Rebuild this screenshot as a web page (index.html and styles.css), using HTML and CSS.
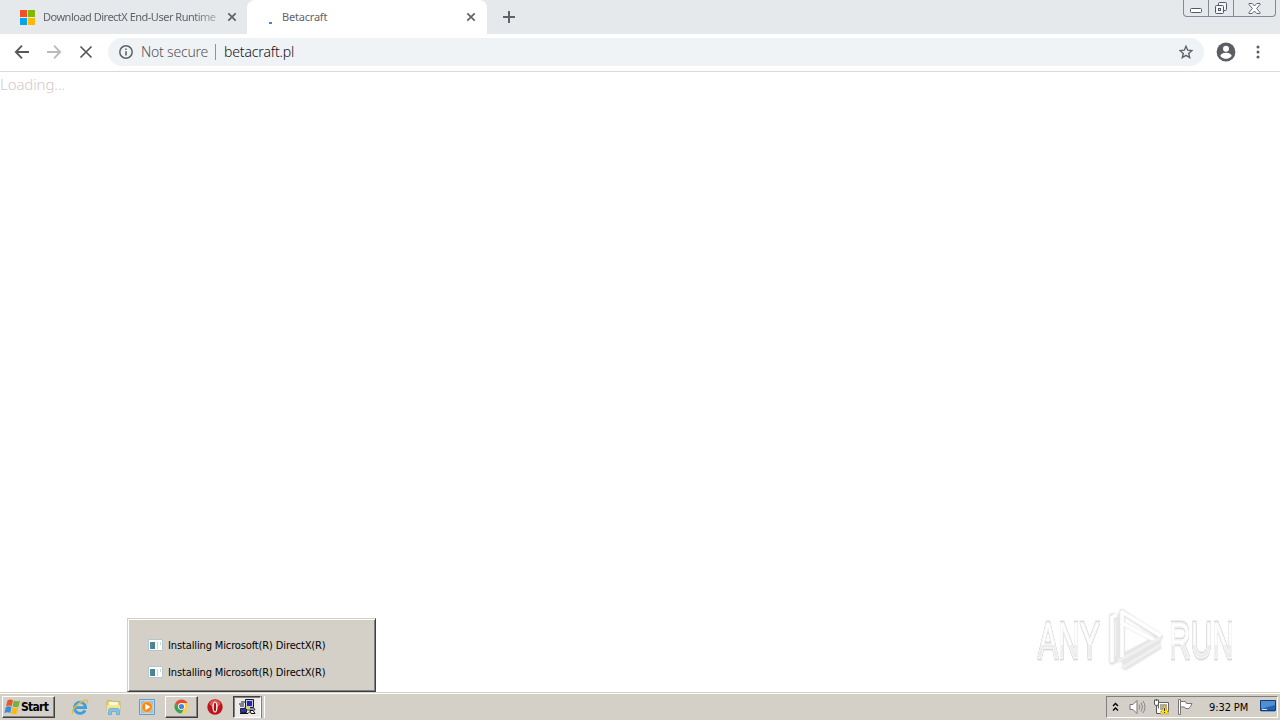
FILE: index.html
```html
<!DOCTYPE html>
<html lang="en">
<head>
<meta charset="utf-8">
<title>Betacraft</title>
<link rel="stylesheet" href="styles.css">
</head>
<body>
<div class="screen">
  <header class="tabstrip">
    <div class="tab tab-first">
      <svg class="favicon" width="15" height="15" viewBox="0 0 15 15"><path fill="#f25022" d="M0 0h7v7H0z"/><path fill="#7fba00" d="M8 0h7v7H8z"/><path fill="#00a4ef" d="M0 8h7v7H0z"/><path fill="#ffb900" d="M8 8h7v7H8z"/></svg>
      <span class="tab-title fade">Download DirectX End-User Runtime</span>
      <svg class="close" width="10" height="10" viewBox="0 0 10 10"><path d="M1.300 1.300l7.400 7.400M8.700 1.300L1.300 8.700"/></svg>
    </div>
    <div class="tab tab-active">
      <span class="spinner"></span>
      <span class="tab-title">Betacraft</span>
      <svg class="close" width="10" height="10" viewBox="0 0 10 10"><path d="M1.300 1.300l7.400 7.400M8.700 1.300L1.300 8.700"/></svg>
    </div>
    <svg class="newtab" width="12" height="12" viewBox="0 0 12 12"><path d="M6 0v12M0 6h12"/></svg>
    <div class="winbuttons">
      <span class="wb wb-side"><svg width="12" height="6" viewBox="0 0 12 6"><rect x=".5" y=".5" width="11" height="4" rx="1" fill="#fff" stroke="#535666"/></svg></span>
      <span class="wb wb-mid"><svg width="14" height="14" viewBox="0 0 14 14" fill="#f4f5f6" stroke="#535666"><rect x="4.5" y="1.5" width="8" height="8" rx="1"/><rect x="1.500" y="4.500" width="8" height="8" rx="1"/><rect x="4.500" y="7.500" width="2" height="2"/></svg></span>
      <span class="wb wb-close"><svg width="13" height="11" viewBox="0 0 13 11"><path d="M1 .5h3.200L6.500 3 8.800.5H12v1L8.600 5.500 12 9.500v1H8.800L6.500 8l-2.300 2.500H1v-1l3.400-4L1 1.500z" fill="#fff" stroke="#535666" stroke-width=".9"/></svg></span>
    </div>
  </header>
  <nav class="toolbar">
    <svg class="nav" width="16" height="16" viewBox="0 0 16 16"><path d="M15 8H2M8 1.700L1.800 8 8 14.300"/></svg>
    <svg class="nav forward" width="16" height="16" viewBox="0 0 16 16"><path d="M1 8h13M8 1.700L14.200 8 8 14.300"/></svg>
    <svg class="nav stop" width="16" height="16" viewBox="0 0 16 16"><path d="M2.500 2.500l11 11M13.500 2.500l-11 11"/></svg>
    <div class="omnibox">
      <svg width="14" height="14" viewBox="0 0 14 14"><circle cx="7" cy="7" r="6.200" fill="none" stroke="#5f6368" stroke-width="1.500"/><path fill="#5f6368" d="M6.200 6.200h1.600v4.200H6.200zM6.200 3.400h1.600V5H6.200z"/></svg>
      <span class="secure">Not secure</span>
      <span class="divider"></span>
      <span class="url">betacraft.pl</span>
      <svg class="star" width="14" height="14" viewBox="0 0 14 14"><path d="M7 1.300l1.700 3.900 4.200.4-3.200 2.800 1 4.200L7 10.400l-3.700 2.200 1-4.200L1.100 5.600l4.200-.4z" fill="none" stroke="#5f6368" stroke-width="1.400"/></svg>
    </div>
    <svg class="profile" width="20" height="20" viewBox="0 0 20 20"><circle cx="10" cy="10" r="9.400" fill="#5a5d62"/><circle cx="10" cy="6.800" r="3" fill="#fff"/><path d="M4.300 14c.5-2.500 4-3.200 5.700-3.200s5.200.7 5.700 3.200c-1.400 1.900-3.500 2.800-5.700 2.800S5.700 15.900 4.300 14z" fill="#fff"/></svg>
    <svg class="menu" width="4" height="14" viewBox="0 0 4 14" fill="#5a5d62"><circle cx="2" cy="2" r="1.500"/><circle cx="2" cy="7" r="1.500"/><circle cx="2" cy="12" r="1.500"/></svg>
  </nav>
  <main class="page">
    <span class="loading">Loading...</span>
  </main>
  <footer class="taskbar">
    <div class="start">
      <svg width="17" height="16" viewBox="0 0 17 16"><path fill="#e8562a" d="M3.500 1.500C5.500 0 7 .2 9 1.200L7.700 7.200C6 6.200 4.200 6.200 2 7.300z"/><path fill="#73b33c" d="M9.800 1.600c2 1 4 1 6.200-.2l-1.400 6c-2 1.200-4 1.200-6 .2z"/><path fill="#3a8ddb" d="M1.700 8.200c2-1.200 4-1 5.800-.1l-1.300 6C4.500 13 2.600 13 .4 14.200z"/><path fill="#f4bb1d" d="M8.300 8.500c2 1 4 1 6-.1l-1.400 6c-2 1.200-4 1.100-5.900.1z"/></svg>
      <span class="start-text">Start</span>
    </div>
    <div class="launch">
      <svg class="ie" width="18" height="18" viewBox="0 0 18 18"><path d="M14 12.300A5.600 5.600 0 1 1 14.600 9.700H4" fill="none" stroke="#3b9fe0" stroke-width="2.800"/><path d="M2 15.700C-1 13 7 4.500 13.500 2.200c3-1 3.500.5 2.500 3" fill="none" stroke="#e9b83d" stroke-width="1.500"/></svg>
      <svg class="folder" width="16" height="16" viewBox="0 0 16 16"><path d="M1 1.500h5l1 1h7v10H1z" fill="#e9cf79" stroke="#c5a74c" stroke-width=".6"/><path d="M3 3h9v4H3z" fill="#f8f7df"/><path d="M1 6h13v7H1z" fill="#f7e58c"/><path d="M2.500 15.500v-4q0-2 2-2h7q2 0 2 2v4h-3v-3h-5v3z" fill="#83c3ea" stroke="#4e9bc9" stroke-width=".6"/></svg>
      <svg class="media" width="16" height="16" viewBox="0 0 16 16"><path d="M.5.500h15v15H.5z" fill="#b7dbf0" stroke="#629cc7"/><path d="M2 2h12v12H2z" fill="#8fc2e4"/><circle cx="8" cy="8" r="5.500" fill="#f38b16" stroke="#ffd497" stroke-width=".7"/><path d="M6.300 4.700L11.500 8l-5.200 3.300z" fill="#fff"/></svg>
      <span class="task chrome"><svg width="15" height="15" viewBox="0 0 16 16"><circle cx="8" cy="8" r="7.500" fill="#ffd044"/><path d="M1.500 4.200A7.500 7.500 0 0 1 14.500 4.250H8L4.800 9.800z" fill="#e54b3c"/><path d="M1.500 4.200A7.500 7.500 0 0 0 7.600 15.500L11.200 9.800H4.800z" fill="#35a35a"/><circle cx="8" cy="8" r="3.700" fill="#fff"/><circle cx="8" cy="8" r="2.800" fill="#4285e8"/></svg></span>
      <svg class="opera" width="16" height="16" viewBox="0 0 16 16"><circle cx="8" cy="8" r="7.700" fill="#c0141b"/><ellipse cx="8" cy="4.500" rx="5.500" ry="3.500" fill="#dc5552"/><ellipse cx="8" cy="8" rx="2.600" ry="5.600" fill="#fff"/><ellipse cx="8" cy="8" rx="1.200" ry="4.500" fill="#aa1118"/></svg>
      <span class="task pressed"><svg width="17" height="16" viewBox="0 0 17 16"><path d="M6.500.5h8v8h-8z" fill="#c9c9c9" stroke="#16162e"/><path d="M8 2h5v5H8z" fill="#1b28c8"/><path d="M2 3h4M0 5h5M1 7h4" stroke="#14144d"/><path d="M5 9h10l1 2H6z" fill="#d9d9dc" stroke="#22223b" stroke-width=".8"/><path d="M1.500 9.500h6v4h-6z" fill="#2634bb" stroke="#22223b"/><path d="M1 14.500h8l2-2" fill="none" stroke="#111"/><path d="M11 11.500h3l2 3h-4z" fill="#fff" stroke="#111"/><path d="M7 8h4v2H7z" fill="#e5cf4e"/></svg></span>
      <span class="task-edge"></span>
    </div>
    <div class="tray">
      <svg class="chevrons" width="7" height="10" viewBox="0 0 7 10"><path d="M1 4l2.500-2.500L6 4M1 8.500L3.500 6 6 8.500" fill="none" stroke="#000" stroke-width="1.400"/></svg>
      <svg class="sound" width="17" height="16" viewBox="0 0 17 16" fill="none" stroke="#777"><path d="M1 5.500h3L8 1.500v13l-4-4H1z" fill="#fff"/><path d="M10 5.500q1.700 2.500 0 5M12 3.500q3 4.500 0 9M14 2q4 6 0 12" stroke="#888"/></svg>
      <svg class="network" width="16" height="16" viewBox="0 0 16 16"><path d="M5.500 3.500h10v9h-10z" fill="#fff" stroke="#666"/><path d="M7 5h7v6H7z" fill="#aaa"/><path d="M1.500 1v4q0 1.500 2 1.500T5.500 5V1zM3.500 6.500v8H9M3.500 0v2" fill="#fff" stroke="#555"/><path d="M11.500 6l4.300 9H7.200z" fill="#ffdd21" stroke="#ba9a18" stroke-width=".6"/><path d="M11 9h1v3h-1zm0 4h1v1h-1z" fill="#333"/></svg>
      <svg class="flag" width="16" height="16" viewBox="0 0 16 16"><path d="M1.500.5h2v15h-2zM3.500 2.500h5l1 2h5.500q-1.500 3.500-3 5H8.500l-1-1.500h-4z" fill="#fff" stroke="#777"/></svg>
      <span class="clock">9:32 PM</span>
      <svg class="desktop" width="16" height="13" viewBox="0 0 16 13"><path d="M.5.500h15v10H.5z" fill="#2163b2" stroke="#133b75"/><path d="M1 1h14v4L1 9z" fill="#4e91d2"/><path d="M1 11h14v1H1z" fill="#77a7d6"/><path d="M2 9h5v1H2z" fill="#d0e6f5"/></svg>
    </div>
  </footer>
  <div class="group-menu">
    <div class="menu-row"><svg width="15" height="12" viewBox="0 0 15 12"><path d="M.5.500h14v11H.5z" fill="#fff" stroke="#b4c8cc"/><path d="M2 3h5v7H2z" fill="#438787"/><path d="M2 3h2v7H2z" fill="#5a80aa"/><path d="M9 3h1v7H9zM12 3h1v3h-1z" fill="#c8d7d9"/></svg><span class="menu-text">Installing Microsoft(R) DirectX(R)</span></div>
    <div class="menu-row"><svg width="15" height="12" viewBox="0 0 15 12"><path d="M.5.500h14v11H.5z" fill="#fff" stroke="#b4c8cc"/><path d="M2 3h5v7H2z" fill="#438787"/><path d="M2 3h2v7H2z" fill="#5a80aa"/><path d="M9 3h1v7H9zM12 3h1v3h-1z" fill="#c8d7d9"/></svg><span class="menu-text">Installing Microsoft(R) DirectX(R)</span></div>
  </div>
  <div class="watermark">
    <span class="wm-text wm-any">ANY</span>
    <svg class="wm-logo" width="60" height="66" viewBox="0 0 60 66" fill="none" stroke-linejoin="round"><g stroke="#e6e6e6" stroke-width="5"><path d="M5 8v46l7-4V10zM15 4v45L53 29z"/><path d="M15 54l38-22M17 60l36-22"/></g><g stroke="#fff" stroke-width="3.500"><path d="M5 54V9l5-2M15 49V4l39 24"/><path d="M15 15l34 18"/></g><g stroke="#f0f0f0" stroke-width="3"><path d="M11 53l42-23M15 60l38-23"/></g></svg>
    <span class="wm-text wm-run">RUN</span>
  </div>
</div>
</body>
</html>
```
FILE: styles.css
```css
* { box-sizing: border-box; }
body { margin: 0; font-family: "Noto Sans", "Open Sans", sans-serif; }
svg { display: block; flex: none; }
span { white-space: nowrap; }
.screen { position: relative; width: 1280px; height: 720px; display: flex; flex-direction: column; overflow: hidden; background: #fff; }

.tabstrip { height: 34px; flex: none; display: flex; background: #e5e9ec; }
.tab { display: flex; align-items: center; height: 34px; }
.tab-first { width: 247px; padding: 0 10px 0 20px; }
.tab-active { width: 240px; padding: 0 11px 0 21px; border-radius: 8px 8px 0 0; background: #fff; }
.tab-title { margin-left: 7px; font-size: 11px; line-height: 14px; letter-spacing: -0.2px; color: #5f6368; }
.fade { width: 176px; margin-left: 8px; letter-spacing: -0.5px; -webkit-mask-image: linear-gradient(90deg, #000 85%, rgba(0,0,0,.35)); mask-image: linear-gradient(90deg, #000 85%, rgba(0,0,0,.35)); }
.spinner { width: 3px; height: 2px; margin: 12px 3px 0 1px; background: #4784c8; }
.close { margin-left: auto; fill: none; stroke: #5f6368; stroke-width: 1.7; }
.newtab { margin: 11px 0 0 16px; fill: none; stroke: #5f6368; stroke-width: 2; }
.winbuttons { display: flex; width: 93px; height: 17px; margin: 0 4px 0 auto; border: 1px solid #858993; border-top: 0; border-radius: 0 0 4px 4px; overflow: hidden; }
.wb { display: flex; align-items: center; justify-content: center; border-right: 1px solid #858993; }
.wb-side { width: 25px; padding-top: 5px; }
.wb-mid { width: 25px; }
.wb-close { flex: 1; border-right: 0; }

.toolbar { height: 38px; flex: none; display: flex; align-items: center; padding: 0 20px 2px 14px; border-bottom: 1px solid #d9dbdd; background: #fff; }
.nav { margin-right: 16px; fill: none; stroke: #55585c; stroke-width: 1.8; }
.forward { stroke: #b8babd; }
.stop { margin-right: 14px; stroke-width: 1.7; }
.omnibox { display: flex; align-items: center; width: 1096px; height: 28px; padding: 0 11px; border-radius: 14px; background: #f0f3f5; }
.secure { width: 68px; margin-left: 8px; font-size: 14px; line-height: 20px; letter-spacing: -0.2px; font-weight: 300; color: #505458; }
.divider { width: 1px; height: 16px; margin: 0 8px 0 6px; background: #8f9397; }
.url { font-size: 14px; line-height: 20px; letter-spacing: -0.15px; font-weight: 300; color: #111214; }
.star { margin-left: auto; }
.profile { margin-left: 12px; }
.menu { margin-left: auto; }

.page { flex: 1; padding-top: 2px; background: #fff; }
.loading { display: block; font-size: 15px; line-height: 20px; letter-spacing: -0.1px; font-weight: 300; color: #d3c8c9; }

.taskbar { height: 28px; flex: none; display: flex; align-items: center; padding: 0 2px; border-top: 1px solid #d4d0c8; box-shadow: inset 0 1px #fff; background: #d4d0c8; }
.start { display: flex; align-items: center; width: 53px; height: 22px; padding-left: 1px; border: 1px solid; border-color: #fff #404040 #404040 #fff; box-shadow: inset -1px -1px #808080; }
.start-text { font: bold 12px "DejaVu Sans Condensed", "DejaVu Sans", sans-serif; letter-spacing: -0.7px; color: #000; }
.launch { display: flex; align-items: center; height: 22px; margin-left: 16px; }
.folder { margin-left: 17px; }
.media { margin-left: 17px; }
.task { display: flex; align-items: center; justify-content: center; height: 22px; }
.chrome { width: 33px; margin-left: 10px; border: 1px solid; border-color: #fff #404040 #404040 #fff; box-shadow: inset -1px -1px #808080; }
.opera { margin-left: 9px; }
.pressed { width: 28px; margin-left: 10px; border: 1px solid; border-color: #404040 #fff #fff #404040; box-shadow: inset 1px 1px #808080; background: #edebe7; }
.task-edge { width: 4px; height: 22px; border-left: 1px solid #808080; border-right: 1px solid #fff; }
.tray { display: flex; align-items: center; width: 172px; height: 22px; margin: 0 0 0 auto; padding: 0 1px 0 5px; border: 1px solid; border-color: #808080 #fff #fff #808080; }
.sound { margin-left: 10px; }
.network { margin-left: 7px; }
.flag { margin-left: 8px; }
.clock { width: 40px; margin-left: 16px; padding-top: 2px; font: 11px "DejaVu Sans Condensed", "DejaVu Sans", sans-serif; letter-spacing: -0.1px; color: #000; }
.desktop { margin-left: auto; }

.group-menu { position: absolute; left: 127px; top: 618px; width: 249px; height: 74px; display: flex; flex-direction: column; padding: 12px 0 0 20px; border: 1px solid; border-color: #d4d0c8 #404040 #404040 #d4d0c8; box-shadow: inset 1px 1px #fff, inset -1px -1px #808080; background: #d4d0c8; }
.menu-row { display: flex; align-items: center; height: 27px; }
.menu-text { margin-left: 5px; padding-top: 2px; font: 11px "DejaVu Sans Condensed", "DejaVu Sans", sans-serif; letter-spacing: -0.13px; color: #000; }

.watermark { position: absolute; left: 1038px; top: 608px; display: flex; align-items: center; height: 66px; }
.wm-text { width: 110px; height: 60px; margin-right: -44px; font: 50px/60px "Liberation Sans", sans-serif; color: transparent; background: linear-gradient(#fff 56%, #ececec 57%); -webkit-background-clip: text; background-clip: text; -webkit-text-stroke: 1.5px #f6f6f6; filter: drop-shadow(0 0 1px #b8b8b8) drop-shadow(0 0 1px #ccc); transform-origin: 0 50%; transform: scaleX(.6); }
.wm-logo { margin-left: 3px; filter: drop-shadow(0 0 1px #ddd); }
.wm-run { margin-left: 2px; }
```
